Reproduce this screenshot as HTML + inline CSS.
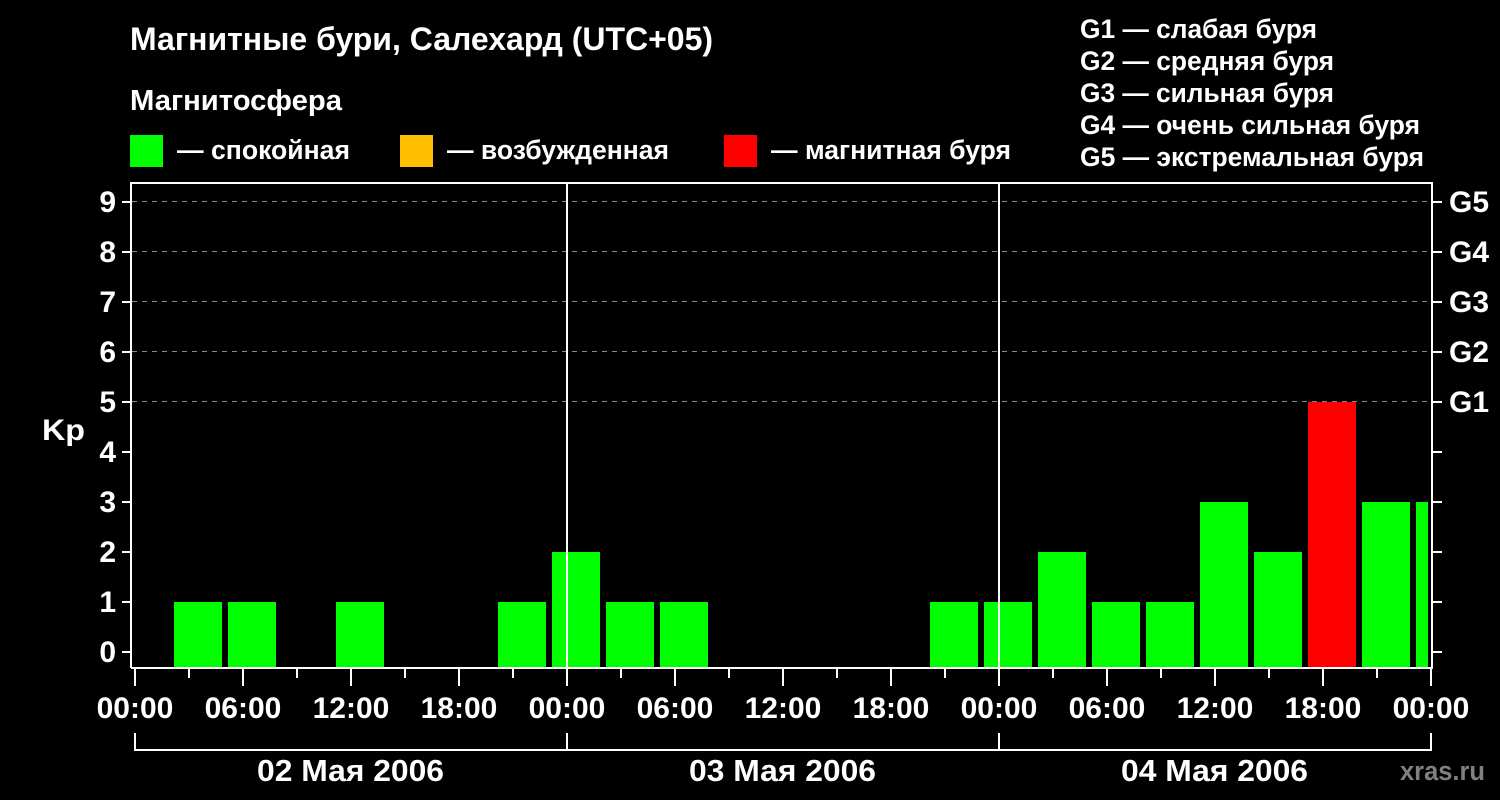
<!DOCTYPE html>
<html><head><meta charset="utf-8"><style>html,body{margin:0;padding:0;background:#000}svg{display:block}text{font-family:"Liberation Sans","DejaVu Sans",sans-serif;font-weight:bold;fill:#fff}</style></head><body>
<svg width="1500" height="800" viewBox="0 0 1500 800">
<rect width="1500" height="800" fill="#000"/>
<text x="130" y="50" font-size="32" textLength="583" lengthAdjust="spacingAndGlyphs">Магнитные бури, Салехард (UTC+05)</text>
<text x="130" y="110" font-size="29" textLength="212" lengthAdjust="spacingAndGlyphs">Магнитосфера</text>
<rect x="130" y="135" width="33" height="32" fill="#00ff00"/>
<text x="177" y="159" font-size="26.5" textLength="173" lengthAdjust="spacingAndGlyphs">— спокойная</text>
<rect x="400" y="135" width="33" height="32" fill="#ffbf00"/>
<text x="447" y="159" font-size="26.5" textLength="222" lengthAdjust="spacingAndGlyphs">— возбужденная</text>
<rect x="724" y="135" width="33" height="32" fill="#ff0000"/>
<text x="771" y="159" font-size="26.5" textLength="240" lengthAdjust="spacingAndGlyphs">— магнитная буря</text>
<g font-size="26.5">
<text x="1080" y="38" textLength="237" lengthAdjust="spacingAndGlyphs">G1 — слабая буря</text>
<text x="1080" y="70" textLength="254" lengthAdjust="spacingAndGlyphs">G2 — средняя буря</text>
<text x="1080" y="102" textLength="254" lengthAdjust="spacingAndGlyphs">G3 — сильная буря</text>
<text x="1080" y="134" textLength="340" lengthAdjust="spacingAndGlyphs">G4 — очень сильная буря</text>
<text x="1080" y="166" textLength="344" lengthAdjust="spacingAndGlyphs">G5 — экстремальная буря</text>
</g>
<g stroke="#888" stroke-width="1" stroke-dasharray="5,5">
<line x1="132" y1="201.5" x2="1431" y2="201.5"/><line x1="132" y1="251.5" x2="1431" y2="251.5"/><line x1="132" y1="301.5" x2="1431" y2="301.5"/><line x1="132" y1="351.5" x2="1431" y2="351.5"/><line x1="132" y1="401.5" x2="1431" y2="401.5"/>
</g>
<g fill="#00ff00">
<rect x="174" y="602" width="48" height="66"/><rect x="228" y="602" width="48" height="66"/><rect x="336" y="602" width="48" height="66"/><rect x="498" y="602" width="48" height="66"/><rect x="552" y="552" width="48" height="116"/><rect x="606" y="602" width="48" height="66"/><rect x="660" y="602" width="48" height="66"/><rect x="930" y="602" width="48" height="66"/><rect x="984" y="602" width="48" height="66"/><rect x="1038" y="552" width="48" height="116"/><rect x="1092" y="602" width="48" height="66"/><rect x="1146" y="602" width="48" height="66"/><rect x="1200" y="502" width="48" height="166"/><rect x="1254" y="552" width="48" height="116"/><rect x="1362" y="502" width="48" height="166"/><rect x="1416" y="502" width="12" height="166"/>
</g>
<rect x="1308" y="402" width="48" height="266" fill="#ff0000"/>
<g stroke="#fff" stroke-width="2" fill="none">
<path d="M131 668 V183 H1432 V668 H131"/>
<line x1="567" y1="183" x2="567" y2="668"/><line x1="999" y1="183" x2="999" y2="668"/>
<path d="M122 202H131M122 252H131M122 302H131M122 352H131M122 402H131M122 452H131M122 502H131M122 552H131M122 602H131M122 652H131"/>
<path d="M1432 202H1442M1432 252H1442M1432 302H1442M1432 352H1442M1432 402H1442M1432 452H1442M1432 502H1442M1432 552H1442M1432 602H1442M1432 652H1442"/>
<path d="M135 669V686M243 669V686M351 669V686M459 669V686M567 669V686M675 669V686M783 669V686M891 669V686M999 669V686M1107 669V686M1215 669V686M1323 669V686M1431 669V686"/>
<path d="M189 669V678M297 669V678M405 669V678M513 669V678M621 669V678M729 669V678M837 669V678M945 669V678M1053 669V678M1161 669V678M1269 669V678M1377 669V678"/>
<path d="M135 733V750H1431V733M567 733V750M999 733V750"/>
</g>
<g font-size="30" text-anchor="end">
<text x="116" y="212">9</text><text x="116" y="262">8</text><text x="116" y="312">7</text><text x="116" y="362">6</text><text x="116" y="412">5</text><text x="116" y="462">4</text><text x="116" y="512">3</text><text x="116" y="562">2</text><text x="116" y="612">1</text><text x="116" y="662">0</text>
</g>
<text x="42" y="440" font-size="30" textLength="43" lengthAdjust="spacingAndGlyphs">Kp</text>
<g font-size="30">
<text x="1449" y="212">G5</text><text x="1449" y="262">G4</text><text x="1449" y="312">G3</text><text x="1449" y="362">G2</text><text x="1449" y="412">G1</text>
</g>
<g font-size="30" text-anchor="middle">
<text x="135" y="718">00:00</text><text x="243" y="718">06:00</text><text x="351" y="718">12:00</text><text x="459" y="718">18:00</text><text x="567" y="718">00:00</text><text x="675" y="718">06:00</text><text x="783" y="718">12:00</text><text x="891" y="718">18:00</text><text x="999" y="718">00:00</text><text x="1107" y="718">06:00</text><text x="1215" y="718">12:00</text><text x="1323" y="718">18:00</text><text x="1431" y="718">00:00</text>
</g>
<g font-size="31">
<text x="257" y="781" textLength="187" lengthAdjust="spacingAndGlyphs">02 Мая 2006</text><text x="689" y="781" textLength="187" lengthAdjust="spacingAndGlyphs">03 Мая 2006</text><text x="1121" y="781" textLength="187" lengthAdjust="spacingAndGlyphs">04 Мая 2006</text>
</g>
<text x="1400" y="780" font-size="27" textLength="85" lengthAdjust="spacingAndGlyphs" style="fill:#808080">xras.ru</text>
</svg>
</body></html>
